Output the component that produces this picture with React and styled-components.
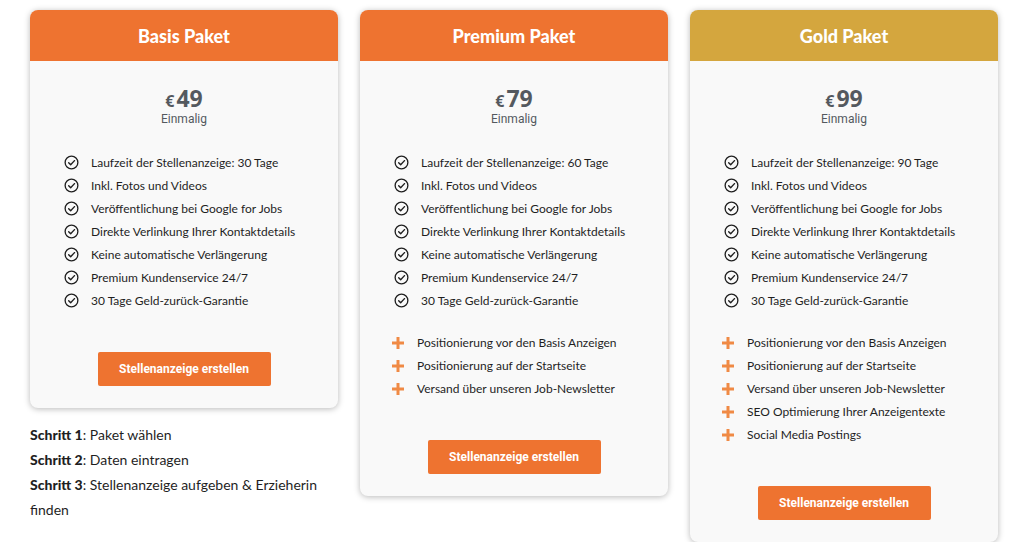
import React from "react";
import styled, { createGlobalStyle } from "styled-components";

const GlobalStyle = createGlobalStyle`
  body {
    margin: 0;
    background: #ffffff;
    font-family: "Lato", "Open Sans", sans-serif;
  }
`;

const packages = [
  {
    name: "Basis Paket",
    price: "49",
    days: 30,
    color: "#ee7330",
    extras: [],
  },
  {
    name: "Premium Paket",
    price: "79",
    days: 60,
    color: "#ee7330",
    extras: [
      "Positionierung vor den Basis Anzeigen",
      "Positionierung auf der Startseite",
      "Versand über unseren Job-Newsletter",
    ],
  },
  {
    name: "Gold Paket",
    price: "99",
    days: 90,
    color: "#d4a63e",
    extras: [
      "Positionierung vor den Basis Anzeigen",
      "Positionierung auf der Startseite",
      "Versand über unseren Job-Newsletter",
      "SEO Optimierung Ihrer Anzeigentexte",
      "Social Media Postings",
    ],
  },
];

const baseFeatures = (days) => [
  `Laufzeit der Stellenanzeige: ${days} Tage`,
  "Inkl. Fotos und Videos",
  "Veröffentlichung bei Google for Jobs",
  "Direkte Verlinkung Ihrer Kontaktdetails",
  "Keine automatische Verlängerung",
  "Premium Kundenservice 24/7",
  "30 Tage Geld-zurück-Garantie",
];

const CheckIcon = () => (
  <svg width="15" height="15" viewBox="0 0 16 16" fill="none">
    <circle cx="8" cy="8" r="6.8" stroke="#1f1f1f" strokeWidth="1.4" />
    <path
      d="M5 8.2l2.1 2.1L11.2 6"
      stroke="#1f1f1f"
      strokeWidth="1.5"
      strokeLinecap="round"
      strokeLinejoin="round"
    />
  </svg>
);

const PlusIcon = () => (
  <svg width="14" height="14" viewBox="0 0 14 14">
    <path d="M7 1v12M1 7h12" stroke="#f08a45" strokeWidth="3" />
  </svg>
);

export default function App() {
  const [basis, ...rest] = packages;
  return (
    <>
      <GlobalStyle />
      <Page>
        <Column>
          <Package pkg={basis} />
          <Steps>
            <p>
              <b>Schritt 1</b>: Paket wählen
            </p>
            <p>
              <b>Schritt 2</b>: Daten eintragen
            </p>
            <p>
              <b>Schritt 3</b>: Stellenanzeige aufgeben &amp; Erzieherin finden
            </p>
          </Steps>
        </Column>
        {rest.map((p) => (
          <Package key={p.name} pkg={p} />
        ))}
      </Page>
    </>
  );
}

function Package({ pkg }) {
  return (
    <Card>
      <Header $color={pkg.color}>{pkg.name}</Header>
      <Body>
        <Price>
          <small>€</small>
          {pkg.price}
        </Price>
        <Period>Einmalig</Period>
        <FeatureList>
          {baseFeatures(pkg.days).map((f) => (
            <Feature key={f}>
              <CheckIcon />
              <span>{f}</span>
            </Feature>
          ))}
        </FeatureList>
        {pkg.extras.length > 0 && (
          <FeatureList $extra>
            {pkg.extras.map((f) => (
              <Feature key={f}>
                <PlusIcon />
                <span>{f}</span>
              </Feature>
            ))}
          </FeatureList>
        )}
        <Button>Stellenanzeige erstellen</Button>
      </Body>
    </Card>
  );
}

const Page = styled.div`
  display: flex;
  align-items: flex-start;
  gap: 22px;
  padding: 10px 0 0 30px;
`;

const Column = styled.div`
  display: flex;
  flex-direction: column;
  width: 308px;
`;

const Card = styled.div`
  width: 308px;
  background: #f9f9f9;
  border-radius: 8px;
  overflow: hidden;
  box-shadow: 0 1px 6px rgba(0, 0, 0, 0.28);
`;

const Header = styled.div`
  height: 51px;
  display: flex;
  align-items: center;
  justify-content: center;
  background: ${(p) => p.$color};
  color: #fff;
  font-family: "Lato", sans-serif;
  font-weight: 900;
  font-size: 18px;
`;

const Body = styled.div`
  display: flex;
  flex-direction: column;
  align-items: center;
  padding: 26px 0 22px;
`;

const Price = styled.div`
  font-family: "Open Sans", sans-serif;
  font-weight: 700;
  font-size: 23px;
  line-height: 23px;
  color: #54595f;
  small {
    font-size: 16px;
    margin-right: 2px;
  }
`;

const Period = styled.div`
  font-family: Roboto, sans-serif;
  font-size: 12px;
  line-height: 12px;
  color: #54595f;
`;

const FeatureList = styled.ul`
  list-style: none;
  margin: ${(p) => (p.$extra ? "25px" : "29px")} 0 0;
  padding: 0 0 0 ${(p) => (p.$extra ? "31px" : "34px")};
  align-self: stretch;
  display: flex;
  flex-direction: column;
  gap: 6px;
`;

const Feature = styled.li`
  display: flex;
  align-items: center;
  gap: 12px;
  height: 17px;
  font-size: 12px;
  color: #1f1f1f;
  svg {
    flex: none;
  }
`;

const Button = styled.button`
  margin-top: 43px;
  width: 173px;
  height: 34px;
  border: none;
  border-radius: 2px;
  background: #ee7330;
  color: #fff;
  font-family: Roboto, sans-serif;
  font-weight: 700;
  font-size: 12px;
  cursor: pointer;
`;

const Steps = styled.div`
  margin-top: 14px;
  font-size: 14px;
  line-height: 25px;
  color: #1f1f1f;
  p {
    margin: 0;
  }
  b {
    font-weight: 900;
  }
`;
